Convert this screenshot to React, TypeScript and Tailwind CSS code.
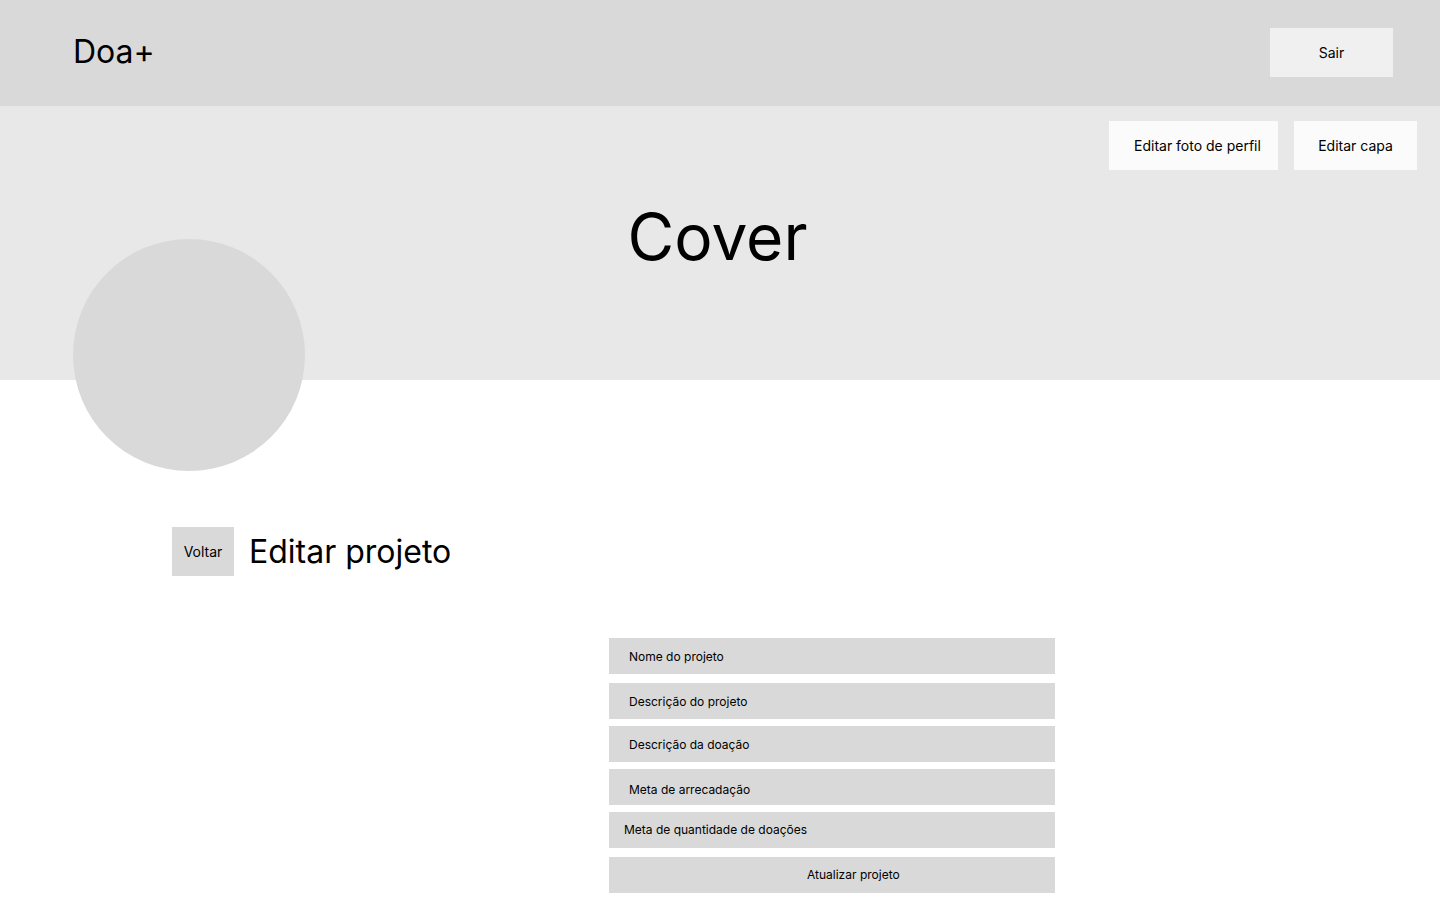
import React from "react";

const fields = [
  { label: "Nome do projeto", pad: "pl-[20px]", mt: "mt-0" },
  { label: "Descrição do projeto", pad: "pl-[20px]", mt: "mt-[9px]" },
  { label: "Descrição da doação", pad: "pl-[20px]", mt: "mt-[7px]" },
  { label: "Meta de arrecadação", pad: "pl-[20px] pt-[5px]", mt: "mt-[7px]" },
  { label: "Meta de quantidade de doações", pad: "pl-[15px] pb-[2px]", mt: "mt-[7px]" },
];

export default function App() {
  return (
    <div className="min-h-[923px] bg-white text-black font-['Inter','Liberation_Sans',sans-serif]">
      {/* top bar */}
      <header className="flex h-[106px] items-start justify-between bg-[#d9d9d9] pl-[73px] pr-[47px] pt-[28px]">
        <span className="mt-[8px] text-[32px] leading-none">Doa+</span>
        <button className="h-[49px] w-[123px] bg-[#f0f0f0] text-[14px]">Sair</button>
      </header>

      {/* cover */}
      <section className="h-[274px] bg-[#e8e8e8] pt-[15px]">
        <div className="flex justify-end gap-[16px] pr-[23px]">
          <button className="h-[49px] w-[169px] bg-[#fbfbfb] pl-[25px] text-left text-[14px]">
            Editar foto de perfil
          </button>
          <button className="h-[49px] w-[123px] bg-[#fbfbfb] text-[14px]">Editar capa</button>
        </div>
        <h1 className="mt-[35px] pr-[5px] text-center text-[64px] leading-none">Cover</h1>
      </section>

      {/* avatar overlaps the cover edge */}
      <div className="-mt-[141px] ml-[73px] h-[232px] w-[232px] rounded-full bg-[#d9d9d9]" />

      <div className="mt-[56px] flex items-center gap-[15px] pl-[172px]">
        <button className="h-[49px] w-[62px] bg-[#d9d9d9] text-[14px]">Voltar</button>
        <h2 className="text-[32px] leading-none">Editar projeto</h2>
      </div>

      <form className="mt-[62px] ml-[609px] flex w-[446px] flex-col" onSubmit={(e) => e.preventDefault()}>
        {fields.map((f) => (
          <input
            key={f.label}
            placeholder={f.label}
            className={`${f.mt} ${f.pad} h-[36px] w-full bg-[#d9d9d9] text-[12px] outline-none placeholder:text-black`}
          />
        ))}
        <button type="submit" className="mt-[9px] h-[36px] w-full bg-[#d9d9d9] pl-[198px] text-left text-[12px]">
          Atualizar projeto
        </button>
      </form>
    </div>
  );
}
